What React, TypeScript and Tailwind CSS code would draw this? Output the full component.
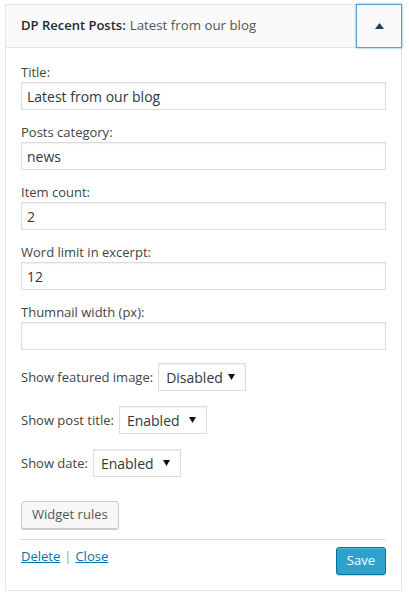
import React from 'react'

const font = { fontFamily: '"Open Sans", "Noto Sans", sans-serif' }

function TextField({ label, value }: { label: string; value: string }) {
  return (
    <div className="mb-[13px]">
      <label className="block text-[13px] leading-[18px] text-[#444]">{label}</label>
      <div className="mt-px flex h-[28px] items-center border border-[#ddd] bg-white px-[5px] text-[14px] text-[#32373c] shadow-[inset_0_1px_2px_rgba(0,0,0,0.07)]">
        {value}
      </div>
    </div>
  )
}

function SelectRow({ label, value }: { label: string; value: string }) {
  return (
    <div className="mb-[15px] flex items-center gap-[5px]">
      <span className="text-[13px] leading-[18px] text-[#444]">{label}</span>
      <div className="flex h-[28px] w-[88px] items-center justify-between border border-[#ddd] bg-white pl-[7px] pr-[10px] text-[14px] text-[#32373c] shadow-[inset_0_1px_2px_rgba(0,0,0,0.07)]">
        <span>{value}</span>
        <svg width="7" height="6" viewBox="0 0 7 6">
          <path d="M0 0h7L3.5 6z" fill="#111" />
        </svg>
      </div>
    </div>
  )
}

export default function App() {
  return (
    <div className="min-h-[596px] bg-white pl-[5px] pr-[7px] pt-[4px]" style={font}>
      <div className="w-[397px] border border-[#e5e5e5] bg-white">
        {/* widget header */}
        <div className="flex h-[43px] items-stretch border-b border-[#e5e5e5] bg-[#fafafa]">
          <div className="flex flex-1 items-center pl-[15px] text-[13px] text-[#23282d]">
            <span className="font-semibold">DP Recent Posts:</span>
            <span className="ml-1 text-[13.3px] text-[#555]">Latest from our blog</span>
          </div>
          <div className="-mr-px -mt-px flex h-[44px] w-[46px] items-center justify-center border border-[#5b9dd9] shadow-[0_0_2px_rgba(30,140,190,0.8)]">
            <svg width="9" height="6" viewBox="0 0 9 6">
              <path d="M0 6L4.5 0 9 6z" fill="#1e3f55" />
            </svg>
          </div>
        </div>

        {/* widget body */}
        <div className="px-[15px] pb-[15px] pt-[15px]">
          <TextField label="Title:" value="Latest from our blog" />
          <TextField label="Posts category:" value="news" />
          <TextField label="Item count:" value="2" />
          <TextField label="Word limit in excerpt:" value="12" />
          <TextField label="Thumnail width (px):" value="" />

          <SelectRow label="Show featured image:" value="Disabled" />
          <SelectRow label="Show post title:" value="Enabled" />
          <SelectRow label="Show date:" value="Enabled" />

          <button className="mt-[9px] h-[28px] rounded-[3px] border border-[#ccc] bg-[#f7f7f7] px-[10px] text-[13px] text-[#555] shadow-[0_1px_0_#ccc]">
            Widget rules
          </button>

          <div className="mt-[10px] border-t border-[#ddd] pt-[7px]">
            <div className="flex items-start justify-between">
              <div className="text-[13px] leading-[18px] text-[#999]">
                <a href="#" className="text-[#0073aa] underline">Delete</a>
                <span className="mx-[4px]">|</span>
                <a href="#" className="text-[#0073aa] underline">Close</a>
              </div>
              <button className="h-[28px] rounded-[3px] border border-[#0074a2] bg-[#2ea2cc] px-[10px] text-[13px] text-white shadow-[inset_0_1px_0_rgba(120,200,230,0.5),0_1px_0_rgba(0,0,0,0.15)]">
                Save
              </button>
            </div>
          </div>
        </div>
      </div>
    </div>
  )
}
